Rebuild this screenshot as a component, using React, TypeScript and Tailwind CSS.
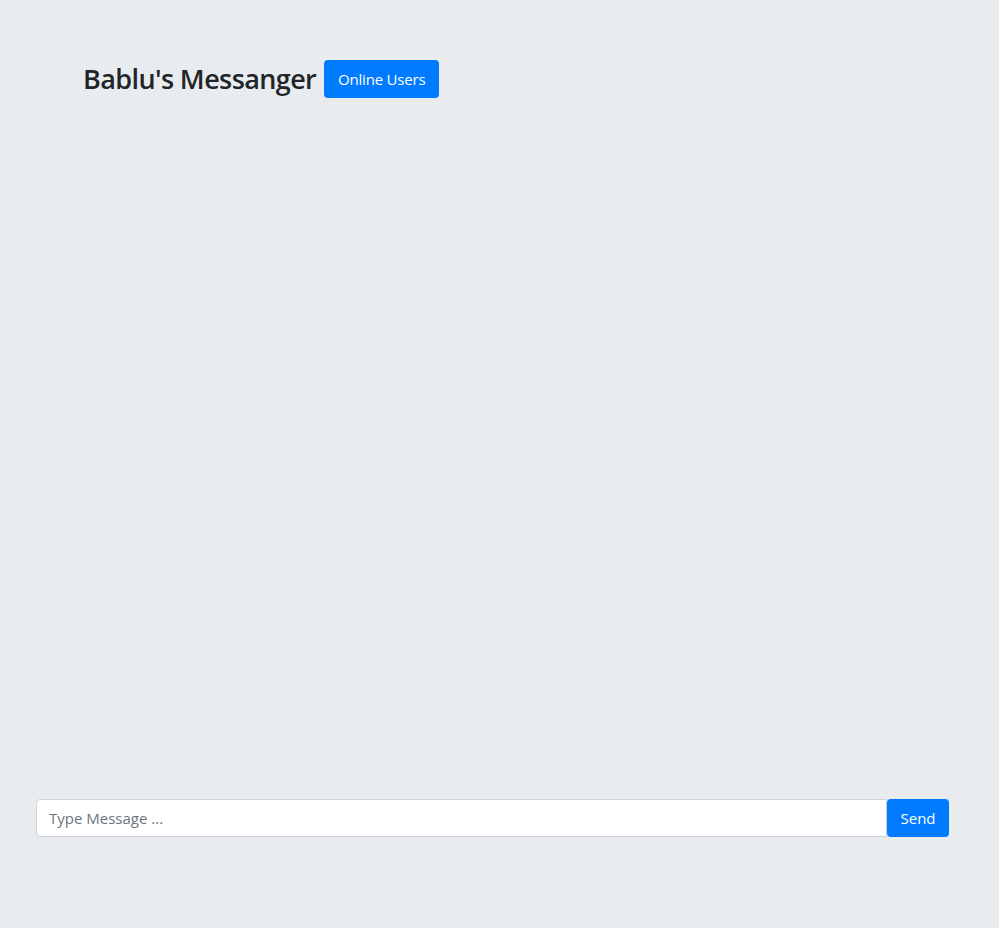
import React from 'react';

function App() {
  return (
    <div
      className="min-h-[928px] w-full bg-[#e9ecef] flex flex-col"
      style={{ fontFamily: '"Open Sans", "Noto Sans", sans-serif' }}
    >
      <div className="flex items-center pl-[83px] pt-[60px]">
        <h1 className="text-[27px] font-semibold text-[#212529] leading-[38px] tracking-[-0.6px]">
          Bablu's Messanger
        </h1>
        <button className="ml-2 h-[38px] w-[115px] bg-[#007bff] text-white text-[15px] tracking-[-0.2px] rounded-[4px]">
          Online Users
        </button>
      </div>

      <div className="flex-1" />

      <div className="flex pl-[36px] pr-[50px] pb-[91px]">
        <input
          type="text"
          placeholder="Type Message ..."
          className="flex-1 h-[38px] px-3 bg-white border border-[#ced4da] rounded-l-[4px] text-[15px] text-[#495057] placeholder:text-[#6c757d] outline-none"
        />
        <button className="h-[38px] w-[62px] bg-[#007bff] text-white text-[15px] rounded-[4px]">
          Send
        </button>
      </div>
    </div>
  );
}

export default App;
